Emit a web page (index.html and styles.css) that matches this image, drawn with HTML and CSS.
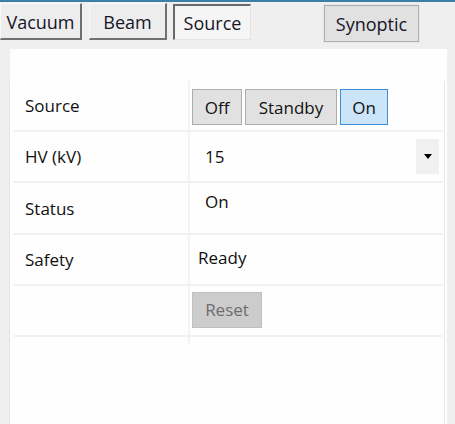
FILE: index.html
```html
<!DOCTYPE html>
<html>
<head>
<meta charset="utf-8">
<link rel="stylesheet" href="styles.css">
</head>
<body>
<div class="topline"></div>
<div class="tabs">
  <div class="tab raised">Vacuum</div>
  <div class="tab raised beam">Beam</div>
  <div class="tab pressed">Source</div>
  <div class="tab flat">Synoptic</div>
</div>
<div class="panel">
  <div class="frame">
    <div class="grid">
      <div class="cell label">Source</div>
      <div class="cell value">
        <div class="seg">
          <span class="btn off">Off</span>
          <span class="btn standby">Standby</span>
          <span class="btn on">On</span>
        </div>
      </div>
      <div class="cell label">HV (kV)</div>
      <div class="cell value">
        <div class="combo">
          <span class="combo-text">15</span>
          <span class="combo-arrow"><svg width="8" height="5" viewBox="0 0 8 5"><path d="M0 0H8L4 5Z" fill="#000"/></svg></span>
        </div>
      </div>
      <div class="cell label">Status</div>
      <div class="cell value top"><span class="status">On</span></div>
      <div class="cell label">Safety</div>
      <div class="cell value"><span class="ready">Ready</span></div>
      <div class="cell label last"></div>
      <div class="cell value last"><span class="btn reset">Reset</span></div>
    </div>
    <div class="tail"><div class="tail-left"></div><div></div></div>
  </div>
</div>
</body>
</html>
```
FILE: styles.css
```css
html, body {
  margin: 0;
  padding: 0;
}
body {
  width: 455px;
  height: 424px;
  overflow: hidden;
  background: #efefef;
  font-family: "Open Sans", "Noto Sans", sans-serif;
  font-size: 17px;
  color: #111;
}
.topline {
  height: 2px;
  background: #3d7ea6;
}
.tabs {
  display: flex;
  align-items: flex-start;
  padding-top: 1px;
  box-sizing: border-box;
  height: 41px;
}
.tab {
  box-sizing: border-box;
  height: 37px;
  display: flex;
  align-items: center;
  justify-content: center;
  font-size: 18px;
  color: #151528;
  padding-top: 1px;
}
.raised {
  background: #ededed;
  border-top: 1px solid #f8f8f8;
  border-left: 1px solid #f8f8f8;
  border-right: 2px solid #707070;
  border-bottom: 2px solid #707070;
}
.tab:nth-child(1) { width: 82px; }
.beam { width: 78px; margin-left: 7px; }
.pressed {
  width: 78px;
  margin-left: 6px;
  margin-top: 1px;
  height: 36px;
  background: #f5f5f5;
  border-top: 2px solid #6a6a6a;
  border-left: 2px solid #6a6a6a;
  border-right: 1px solid #e4e4e4;
  border-bottom: 1px solid #e4e4e4;
}
.flat {
  width: 95px;
  margin-left: 73px;
  margin-top: 2px;
  background: #e1e1e1;
  border: 1px solid #adadad;
  box-shadow: 0 0 0 1px #e8e8e8;
}
.panel {
  margin: 6px 8px 0 10px;
  height: 380px;
  background: #fefefe;
  padding: 32px 2px 0 0;
  box-sizing: border-box;
}
.frame {
  border-left: 1px solid #e6e6e6;
  border-right: 1px solid #e6e6e6;
  margin-left: -1px;
  height: 100%;
}
.grid {
  display: grid;
  grid-template-columns: 176px 1fr;
  grid-template-rows: 51px 51px 52px 51px 51px;
  margin-left: 4px;
  margin-right: 2px;
}
.cell {
  border-bottom: 2px solid #f1f1f1;
  display: flex;
  align-items: center;
  box-sizing: border-box;
}
.label {
  padding-left: 11px;
  border-right: 2px solid #f3f3f3;
}
.value {
  padding-left: 2px;
}
.seg {
  display: flex;
  gap: 3px;
  margin-top: 3px;
}
.btn {
  box-sizing: border-box;
  height: 36px;
  display: inline-flex;
  align-items: center;
  justify-content: center;
  background: #e1e1e1;
  border: 1px solid #adadad;
}
.off { width: 50px; }
.standby { width: 92px; }
.on { width: 48px; background: #cce4f7; border-color: #3c8fd6; }
.combo {
  display: flex;
  align-items: center;
  width: 247px;
  height: 35px;
}
.combo-text {
  padding-left: 13px;
  flex: 1;
}
.combo-arrow {
  width: 23px;
  height: 35px;
  background: #f0f0f0;
  display: flex;
  align-items: center;
  justify-content: center;
}
.top { align-items: flex-start; }
.status {
  padding-left: 13px;
  margin-top: 7px;
}
.ready {
  padding-left: 6px;
  margin-top: -4px;
}
.reset {
  width: 70px;
  height: 36px;
  margin-top: -2px;
  background: #cccccc;
  border-color: #bfbfbf;
  color: #6d6d6d;
}
.tail {
  display: grid;
  grid-template-columns: 176px 1fr;
  margin-left: 4px;
  height: 7px;
}
.tail-left { border-right: 2px solid #f3f3f3; }
```
